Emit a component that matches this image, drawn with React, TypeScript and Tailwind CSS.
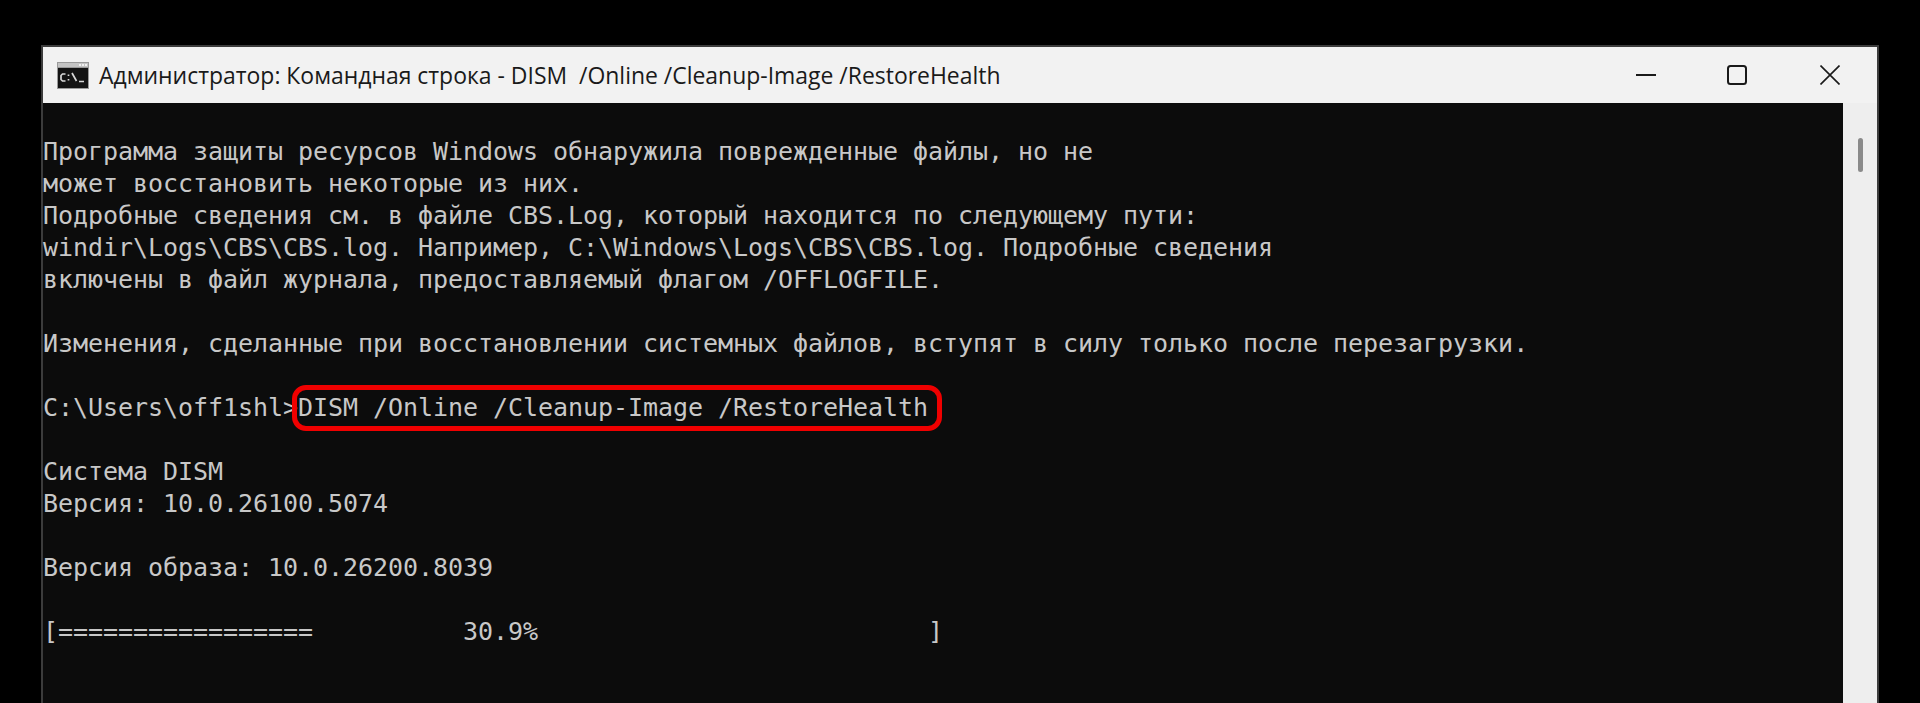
const LINES_TOP = [
  'Программа защиты ресурсов Windows обнаружила поврежденные файлы, но не',
  'может восстановить некоторые из них.',
  'Подробные сведения см. в файле CBS.Log, который находится по следующему пути:',
  'windir\\Logs\\CBS\\CBS.log. Например, C:\\Windows\\Logs\\CBS\\CBS.log. Подробные сведения',
  'включены в файл журнала, предоставляемый флагом /OFFLOGFILE.',
  '',
  'Изменения, сделанные при восстановлении системных файлов, вступят в силу только после перезагрузки.',
  '',
]

const LINES_BOTTOM = [
  '',
  'Система DISM',
  'Версия: 10.0.26100.5074',
  '',
  'Версия образа: 10.0.26200.8039',
  '',
  '[=================          30.9%                          ]',
]

function Line({ text }: { text: string }) {
  return <div className="h-[32px] whitespace-pre">{text}</div>
}

function CmdIcon() {
  return (
    <svg width="32" height="27" viewBox="0 0 32 27" className="shrink-0">
      <rect width="32" height="27" fill="#9a9a9a" />
      <rect x="1" y="1" width="30" height="4" fill="#c4c4c4" />
      <rect x="1" y="6" width="30" height="20" fill="#141414" />
      <rect x="22" y="2" width="2" height="2" fill="#f0f0f0" />
      <rect x="25" y="2" width="2" height="2" fill="#f0f0f0" />
      <rect x="28" y="2" width="2" height="2" fill="#f0f0f0" />
      <path
        d="M8.5 12H5.5L4 13.5v4L5.5 19H8.5M11.5 12.5v1.5M11.5 17v1.5M15 11l4.5 8M22 19.5h5"
        fill="none"
        stroke="#d8d8d8"
        strokeWidth="1.7"
      />
    </svg>
  )
}

function TitleBar() {
  return (
    <div className="flex h-[56px] shrink-0 items-center bg-[#f2f2f2] pl-[14px] text-[#1a1a1a]">
      <CmdIcon />
      <span className="ml-[10px] whitespace-pre font-['Open_Sans','Noto_Sans',sans-serif] text-[22.95px]">
        Администратор: Командная строка - DISM  /Online /Cleanup-Image /RestoreHealth
      </span>
      <div className="ml-auto flex items-center">
        <svg width="20" height="2" viewBox="0 0 20 2" className="mr-[71px]">
          <rect width="20" height="2" fill="#1a1a1a" />
        </svg>
        <svg width="20" height="20" viewBox="0 0 20 20" className="mr-[73px]">
          <rect x="1" y="1" width="18" height="18" rx="2.5" fill="none" stroke="#1a1a1a" strokeWidth="2" />
        </svg>
        <svg width="20" height="20" viewBox="0 0 20 20" className="mr-[37px]">
          <path d="M0.5 0.5L19.5 19.5M19.5 0.5L0.5 19.5" fill="none" stroke="#1a1a1a" strokeWidth="1.6" />
        </svg>
      </div>
    </div>
  )
}

export default function App() {
  return (
    <div className="h-[703px] overflow-hidden bg-black pl-[41px] pr-[41px] pt-[45px]">
      <div className="flex h-[658px] flex-col border-x-2 border-t-2 border-[#3c3c3c]">
        <TitleBar />
        <div className="flex min-h-0 flex-1">
          <div className="min-w-0 flex-1 bg-[#0c0c0c] pt-[33px] font-['DejaVu_Sans_Mono',monospace] text-[25px] leading-[32px] tracking-[-0.05px] text-[#c8c8c8]">
            {LINES_TOP.map((text, i) => (
              <Line key={i} text={text} />
            ))}
            <div className="h-[32px] whitespace-pre">
              C:\Users\off1shl&gt;
              <span className="relative">
                DISM /Online /Cleanup-Image /RestoreHealth
                <span className="absolute -left-[6px] -right-[14px] -top-[8px] -bottom-[9px] rounded-[14px] border-[5px] border-[#f00000]" />
              </span>
            </div>
            {LINES_BOTTOM.map((text, i) => (
              <Line key={i} text={text} />
            ))}
          </div>
          <div className="w-[34px] shrink-0 bg-[#eeeeee] pl-[15px] pt-[35px]">
            <div className="h-[34px] w-[5px] rounded-full bg-[#8a8a8a]" />
          </div>
        </div>
      </div>
    </div>
  )
}
